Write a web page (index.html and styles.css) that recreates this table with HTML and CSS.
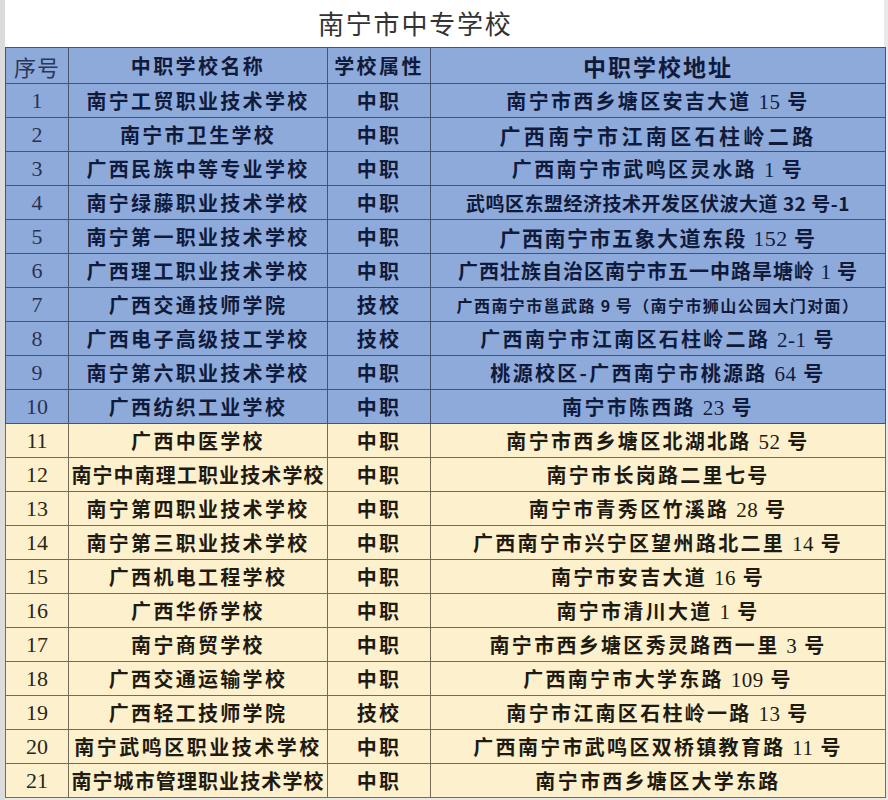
FILE: index.html
```html
<!DOCTYPE html>
<html lang="zh-CN">
<head>
<meta charset="utf-8">
<title>南宁市中专学校</title>
<link rel="stylesheet" href="styles.css">
</head>
<body>
<div class="page">
  <div class="title">南宁市中专学校</div>
  <table class="schools">
    <colgroup>
      <col class="c-no"><col class="c-name"><col class="c-type"><col class="c-addr">
    </colgroup>
    <thead>
      <tr class="head">
        <th class="h-no">序号</th>
        <th class="h-name">中职学校名称</th>
        <th class="h-type">学校属性</th>
        <th class="h-addr">中职学校地址</th>
      </tr>
    </thead>
    <tbody>
      <tr class="blue"><td class="no">1</td><td class="name">南宁工贸职业技术学校</td><td class="type">中职</td><td class="addr">南宁市西乡塘区安吉大道 <span class="num">15</span> 号</td></tr>
      <tr class="blue"><td class="no">2</td><td class="name">南宁市卫生学校</td><td class="type">中职</td><td class="addr big">广西南宁市江南区石柱岭二路</td></tr>
      <tr class="blue"><td class="no">3</td><td class="name">广西民族中等专业学校</td><td class="type">中职</td><td class="addr">广西南宁市武鸣区灵水路 <span class="num">1</span> 号</td></tr>
      <tr class="blue"><td class="no">4</td><td class="name">南宁绿藤职业技术学校</td><td class="type">中职</td><td class="addr small">武鸣区东盟经济技术开发区伏波大道 32 号-1</td></tr>
      <tr class="blue"><td class="no">5</td><td class="name">南宁第一职业技术学校</td><td class="type">中职</td><td class="addr bigger">广西南宁市五象大道东段 <span class="num">152</span> 号</td></tr>
      <tr class="blue"><td class="no">6</td><td class="name">广西理工职业技术学校</td><td class="type">中职</td><td class="addr tight">广西壮族自治区南宁市五一中路旱塘岭 <span class="num">1</span> 号</td></tr>
      <tr class="blue"><td class="no">7</td><td class="name">广西交通技师学院</td><td class="type">技校</td><td class="addr tiny">广西南宁市邕武路 <span class="num">9</span> 号（南宁市狮山公园大门对面）</td></tr>
      <tr class="blue"><td class="no">8</td><td class="name">广西电子高级技工学校</td><td class="type">技校</td><td class="addr">广西南宁市江南区石柱岭二路 <span class="num">2-1</span> 号</td></tr>
      <tr class="blue"><td class="no">9</td><td class="name">南宁第六职业技术学校</td><td class="type">中职</td><td class="addr">桃源校区-广西南宁市桃源路 <span class="num">64</span> 号</td></tr>
      <tr class="blue"><td class="no">10</td><td class="name">广西纺织工业学校</td><td class="type">中职</td><td class="addr">南宁市陈西路 <span class="num">23</span> 号</td></tr>
      <tr class="cream"><td class="no">11</td><td class="name">广西中医学校</td><td class="type">中职</td><td class="addr">南宁市西乡塘区北湖北路 <span class="num">52</span> 号</td></tr>
      <tr class="cream"><td class="no">12</td><td class="name long">南宁中南理工职业技术学校</td><td class="type">中职</td><td class="addr">南宁市长岗路二里七号</td></tr>
      <tr class="cream"><td class="no">13</td><td class="name">南宁第四职业技术学校</td><td class="type">中职</td><td class="addr">南宁市青秀区竹溪路 <span class="num">28</span> 号</td></tr>
      <tr class="cream"><td class="no">14</td><td class="name">南宁第三职业技术学校</td><td class="type">中职</td><td class="addr">广西南宁市兴宁区望州路北二里 <span class="num">14</span> 号</td></tr>
      <tr class="cream"><td class="no">15</td><td class="name">广西机电工程学校</td><td class="type">中职</td><td class="addr">南宁市安吉大道 <span class="num">16</span> 号</td></tr>
      <tr class="cream"><td class="no">16</td><td class="name">广西华侨学校</td><td class="type">中职</td><td class="addr">南宁市清川大道 <span class="num">1</span> 号</td></tr>
      <tr class="cream"><td class="no">17</td><td class="name">南宁商贸学校</td><td class="type">中职</td><td class="addr">南宁市西乡塘区秀灵路西一里 <span class="num">3</span> 号</td></tr>
      <tr class="cream"><td class="no">18</td><td class="name">广西交通运输学校</td><td class="type">中职</td><td class="addr">广西南宁市大学东路 <span class="num">109</span> 号</td></tr>
      <tr class="cream"><td class="no">19</td><td class="name">广西轻工技师学院</td><td class="type">技校</td><td class="addr">南宁市江南区石柱岭一路 <span class="num">13</span> 号</td></tr>
      <tr class="cream"><td class="no">20</td><td class="name mid">南宁武鸣区职业技术学校</td><td class="type">中职</td><td class="addr">广西南宁市武鸣区双桥镇教育路 <span class="num">11</span> 号</td></tr>
      <tr class="cream"><td class="no">21</td><td class="name long">南宁城市管理职业技术学校</td><td class="type">中职</td><td class="addr">南宁市西乡塘区大学东路</td></tr>
    </tbody>
  </table>
</div>
</body>
</html>
```

FILE: styles.css
```css
html, body {
  margin: 0;
  padding: 0;
  background: #ffffff;
}

.page {
  width: 883px;
  height: 800px;
  border-left: 5px solid #dcdcdc;
  background: #e9e9e9;
  font-family: "Noto Sans CJK SC", "Noto Sans", sans-serif;
  overflow: hidden;
}

.title {
  height: 47px;
  background: #ffffff;
  padding-left: 313px;
  font-size: 26px;
  letter-spacing: 1.8px;
  line-height: 46px;
  color: #333333;
  width: 566px;
}

.schools {
  border-collapse: collapse;
  width: 880px;
  table-layout: fixed;
}

.c-no { width: 63px; }
.c-name { width: 259px; }
.c-type { width: 103px; }
.c-addr { width: 455px; }

.schools th,
.schools td {
  padding: 0;
  text-align: center;
  white-space: nowrap;
  overflow: hidden;
}

.head {
  height: 36px;
  background: #8eaadb;
}

.head th {
  border: 1px solid #46546f;
  color: #101a3a;
  font-weight: 700;
  font-size: 20px;
  letter-spacing: 2.4px;
}

.head .h-no {
  font-weight: 400;
  font-size: 22px;
  letter-spacing: 1px;
  color: #2c3655;
}

.head .h-addr {
  font-size: 23px;
  letter-spacing: 2px;
}

tbody tr {
  height: 34px;
}

.blue {
  background: #8eaadb;
  color: #101a3a;
}

.blue td {
  border: 1px solid #46546f;
}

.cream {
  background: #fdf1cd;
  color: #1f1b12;
}

.cream td {
  border: 1px solid #746c58;
}

td.no {
  font-family: "Liberation Serif", "DejaVu Serif", serif;
  font-size: 22px;
  font-weight: 400;
  color: #2a3250;
}

.cream td.no {
  color: #2a2618;
}

td.name,
td.type,
td.addr {
  font-weight: 700;
  font-size: 20px;
  letter-spacing: 2.3px;
}

td.name.long {
  letter-spacing: 1.1px;
}

td.name.mid {
  letter-spacing: 2.5px;
}

.num {
  font-family: "Liberation Serif", "DejaVu Serif", serif;
  font-weight: 400;
  font-size: 21px;
  letter-spacing: 0.5px;
}

td.addr.big {
  font-size: 21px;
  letter-spacing: 3.4px;
}

td.addr.bigger {
  font-size: 21px;
  letter-spacing: 1.5px;
}

td.addr.bigger .num {
  font-size: 22px;
}

td.addr.tight {
  letter-spacing: 1px;
}

td.addr.small {
  font-size: 19px;
  letter-spacing: 0.5px;
}

td.addr.tiny {
  font-size: 16px;
  letter-spacing: 1.4px;
}

td.addr.tiny .num {
  font-family: "Noto Sans CJK SC", sans-serif;
  font-weight: 700;
  font-size: 16px;
}
```
